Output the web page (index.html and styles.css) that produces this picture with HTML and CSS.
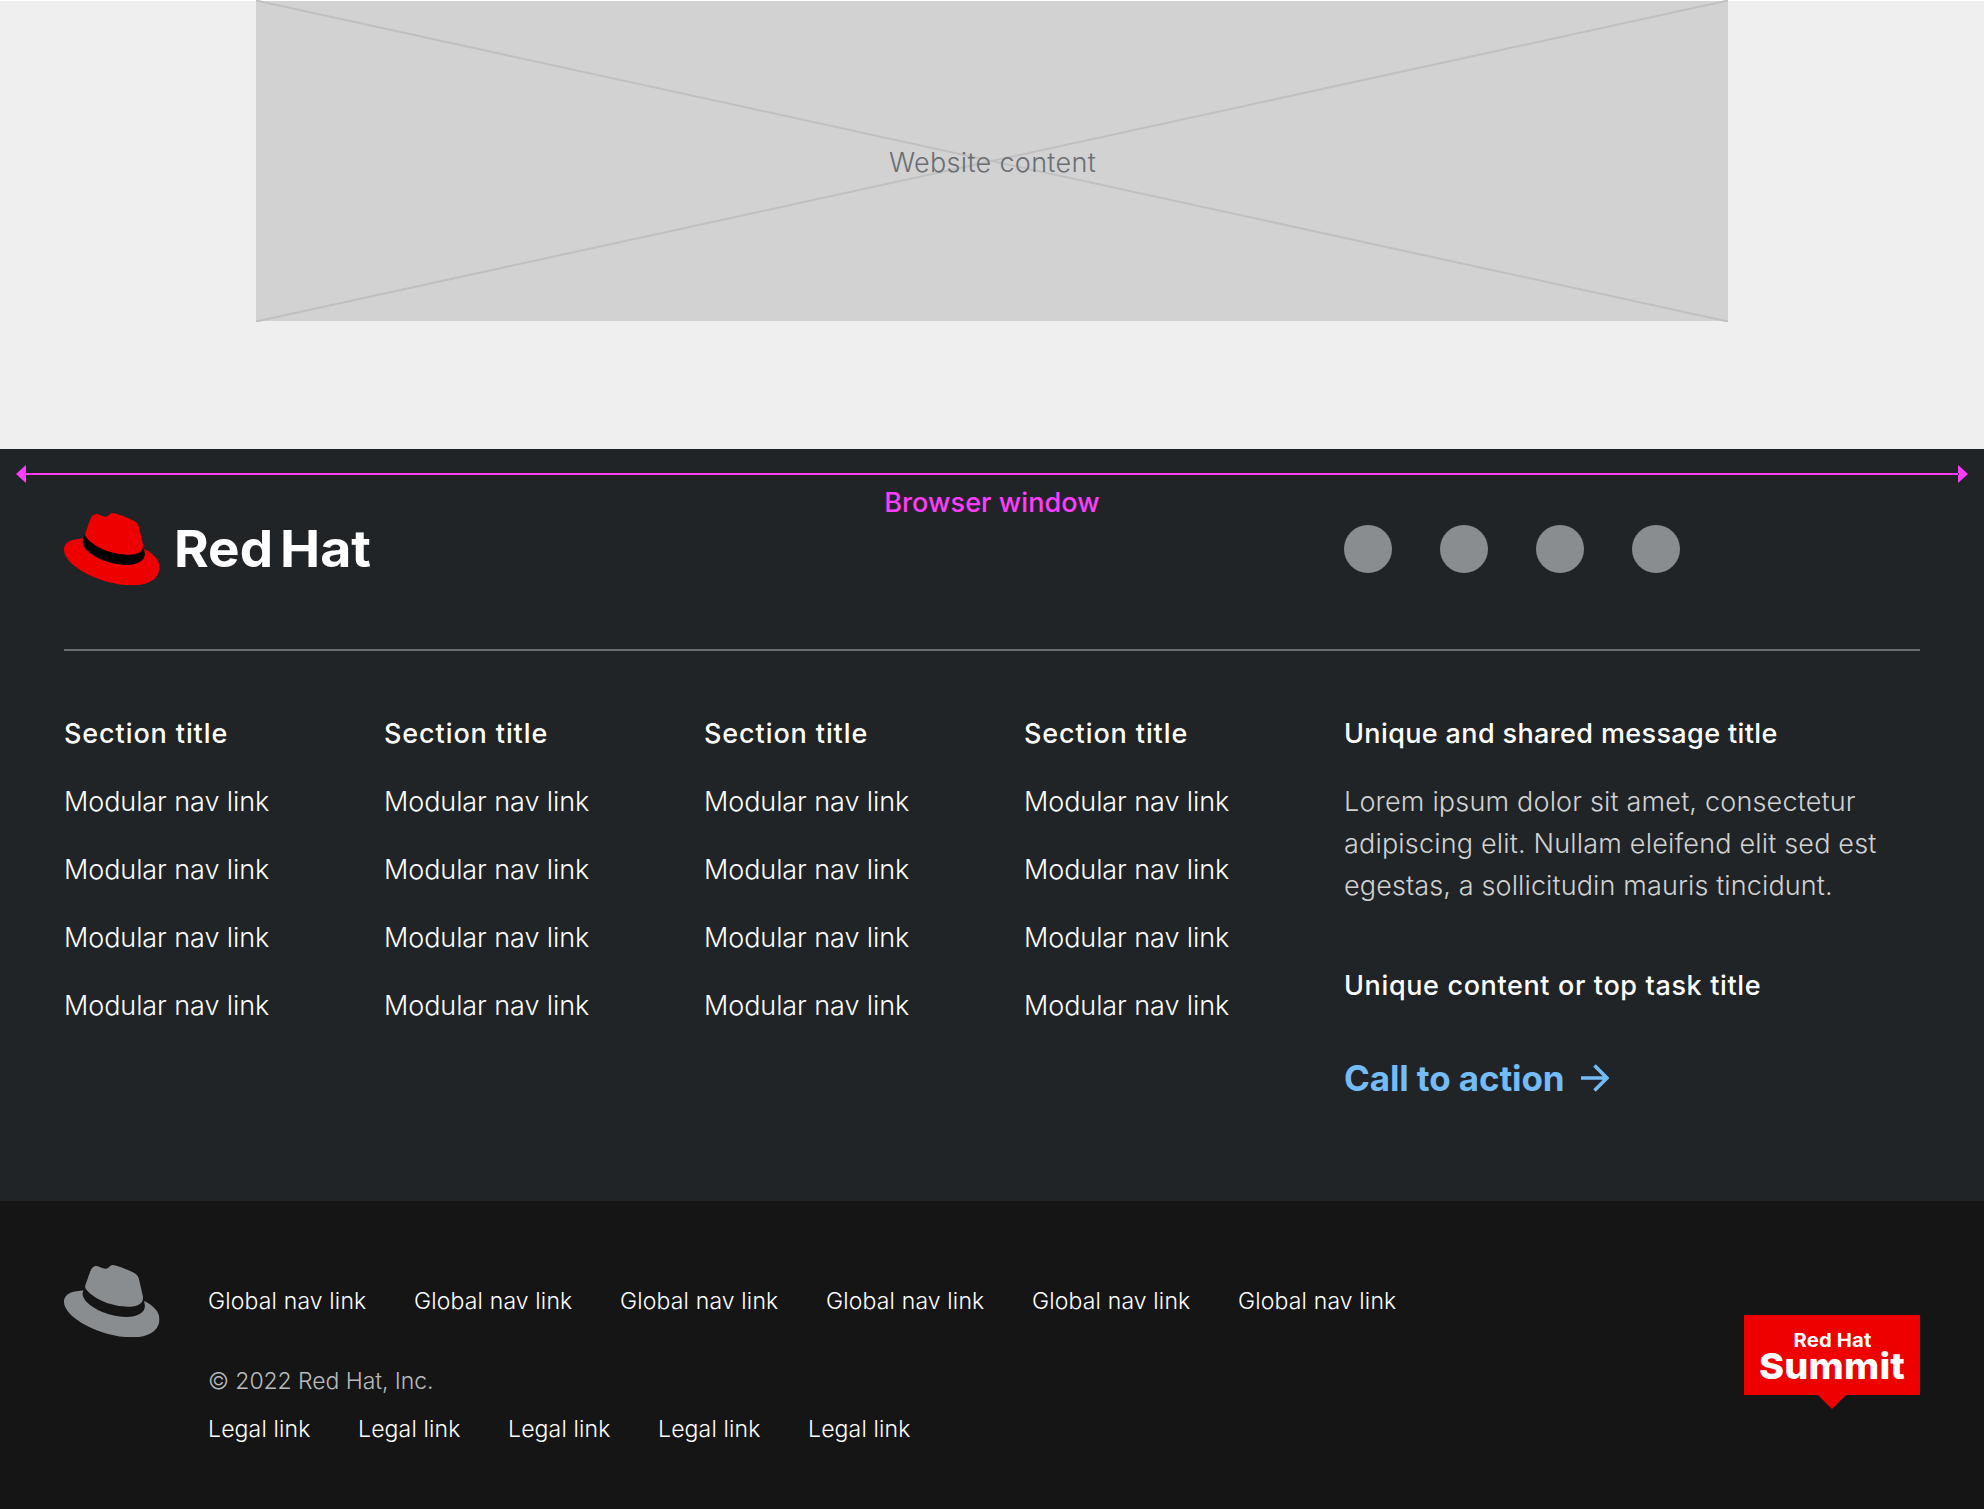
FILE: index.html
```html
<!DOCTYPE html>
<html lang="en">
<head>
<meta charset="utf-8">
<title>Footer</title>
<link rel="stylesheet" href="styles.css">
</head>
<body>
<svg class="defs" aria-hidden="true">
  <symbol id="hat" viewBox="0 2.92 24 18.16">
    <path d="M16.009 13.386c1.577 0 3.86-.326 3.86-2.202a1.765 1.765 0 0 0-.04-.431l-.94-4.08c-.216-.898-.406-1.305-1.982-2.093-1.223-.625-3.888-1.658-4.676-1.658-.733 0-.947.946-1.822.946-.842 0-1.467-.706-2.255-.706-.757 0-1.25.515-1.63 1.576 0 0-1.06 2.99-1.197 3.424a.81.81 0 0 0-.028.245c0 1.162 4.577 4.974 10.71 4.974m4.101-1.435c.218 1.032.218 1.14.218 1.277 0 1.765-1.984 2.745-4.593 2.745-5.895.004-11.06-3.451-11.06-5.734a2.326 2.326 0 0 1 .19-.925C2.746 9.415 0 9.794 0 12.217c0 3.969 9.405 8.861 16.851 8.861 5.71 0 7.149-2.582 7.149-4.62 0-1.605-1.387-3.425-3.887-4.512"/>
  </symbol>
</svg>

<main class="page">
  <div class="placeholder">
    <svg class="cross" viewBox="0 0 1472 321" preserveAspectRatio="none"><path d="M0 .5 1472 320.5M0 320.5 1472 .5"/></svg>
    <span class="placeholder-label">Website content</span>
  </div>
</main>

<footer>
  <div class="primary">
    <div class="measure">
      <svg class="measure-line" viewBox="0 0 1952 18"><path d="M0 9 10 0V18ZM1952 9 1942 0V18ZM9 8H1943V10H9Z"/></svg>
      <span class="measure-label">Browser window</span>
    </div>
    <div class="top">
      <svg class="logo" viewBox="0 0 310 72">
        <path d="M20.11 11.951c.218 1.032.218 1.14.218 1.277 0 1.765-1.984 2.745-4.593 2.745-5.895.004-11.06-3.451-11.06-5.734a2.326 2.326 0 0 1 .19-.925l.463-1.146 8 0 6 3z" transform="translate(0 -11.6) scale(3.98)"/>
        <use class="logo-hat" href="#hat" width="95.5" height="72.3"/>
        <text x="110" y="54.3" textLength="99" lengthAdjust="spacingAndGlyphs">Red</text>
        <text x="216" y="54.3" textLength="91" lengthAdjust="spacingAndGlyphs">Hat</text>
      </svg>
      <div class="social"><i></i><i></i><i></i><i></i></div>
    </div>
    <div class="columns">
      <nav class="links"><h2>Section title</h2><a>Modular nav link</a><a>Modular nav link</a><a>Modular nav link</a><a>Modular nav link</a></nav>
      <nav class="links"><h2>Section title</h2><a>Modular nav link</a><a>Modular nav link</a><a>Modular nav link</a><a>Modular nav link</a></nav>
      <nav class="links"><h2>Section title</h2><a>Modular nav link</a><a>Modular nav link</a><a>Modular nav link</a><a>Modular nav link</a></nav>
      <nav class="links"><h2>Section title</h2><a>Modular nav link</a><a>Modular nav link</a><a>Modular nav link</a><a>Modular nav link</a></nav>
      <section class="message">
        <h2 class="shared">Unique and shared message title</h2>
        <p>Lorem ipsum dolor sit amet, consectetur<br>adipiscing elit. Nullam eleifend elit sed est<br><span class="tight">egestas, a sollicitudin mauris tincidunt.</span></p>
        <h2 class="task">Unique content or top task title</h2>
        <a class="cta">Call to action <svg viewBox="0 0 28 28"><path d="M0 14H26M13.5 1.5 26 14 13.5 26.5"/></svg></a>
      </section>
    </div>
  </div>

  <div class="global">
    <svg class="mark"><use href="#hat" width="95.5" height="72.3"/></svg>
    <div class="global-text">
      <nav class="global-nav"><a>Global nav link</a><a>Global nav link</a><a>Global nav link</a><a>Global nav link</a><a>Global nav link</a><a>Global nav link</a></nav>
      <p class="copyright">© 2022 Red Hat, Inc.</p>
      <nav class="legal"><a>Legal link</a><a>Legal link</a><a>Legal link</a><a>Legal link</a><a>Legal link</a></nav>
    </div>
    <svg class="summit" viewBox="0 0 176 94">
      <path d="M0 0H176V80H102L88 94 74 80H0Z"/>
      <text class="small" x="49.5" y="32" textLength="78" lengthAdjust="spacingAndGlyphs">Red Hat</text>
      <text class="big" x="15" y="64" textLength="146" lengthAdjust="spacingAndGlyphs">Summit</text>
    </svg>
  </div>
</footer>
</body>
</html>
```
FILE: styles.css
```css
* { box-sizing: border-box; }
body { margin: 0; font: 300 27px/42px Inter, sans-serif; color: #fff; background: #151515; }
h2, p { margin: 0; }
svg { display: block; flex: none; }
.defs { position: absolute; width: 0; height: 0; }

.page { height: 449px; border-top: 1px solid #fff; background: #efefef; }
.placeholder { position: relative; width: 1472px; height: 320px; margin: 0 auto; background: #d2d2d2; display: flex; align-items: center; justify-content: center; color: #6a6e73; }
.placeholder-label { position: relative; letter-spacing: .32px; padding: 3px 0 0 1px; }
.cross { position: absolute; left: 0; top: -1px; width: 1472px; height: 322px; fill: none; stroke: #c0c0c0; stroke-width: 2; }

.primary { position: relative; height: 752px; padding: 64px 64px 0; background: #212427; }
.measure { position: absolute; left: 16px; right: 16px; top: 16px; display: flex; flex-direction: column; align-items: center; color: #ff3dff; }
.measure-line { width: 1952px; height: 18px; fill: #ff3dff; }
.measure-label { font-weight: 500; letter-spacing: .08px; line-height: 42px; margin-top: -1px; }

.top { display: flex; height: 138px; border-bottom: 2px solid #6a6e73; }
.logo { width: 310px; height: 72px; overflow: visible; }
.logo-hat { fill: #e00; }
.logo text { fill: #fff; font: 700 51px Inter, sans-serif; }
.social { display: flex; gap: 48px; margin: 12px 0 0 970px; }
.social i { width: 48px; height: 48px; border-radius: 50%; background: #8a8d90; }

.columns { display: grid; grid-template-columns: repeat(4, 320px) 1fr; padding-top: 62px; }
h2 { font-size: 27px; font-weight: 500; line-height: 42px; letter-spacing: .9px; }
.links { display: flex; flex-direction: column; gap: 26px; letter-spacing: -.08px; }
.message p { margin: 26px 0 58px; color: #d2d2d2; letter-spacing: .18px; white-space: nowrap; }
.message .tight { letter-spacing: .12px; }
.shared { letter-spacing: .37px; }
.task { letter-spacing: .63px; }
.cta { display: flex; align-items: center; gap: 16px; margin-top: 44px; font-size: 35px; font-weight: 700; line-height: 54px; letter-spacing: -.12px; color: #73bcf7; }
.cta svg { width: 28px; height: 28px; fill: none; stroke: #73bcf7; stroke-width: 3.6; }

.global { display: flex; height: 308px; padding: 64px 64px 0; font-size: 23px; line-height: 36px; letter-spacing: .15px; background: #151515; }
.mark { width: 96px; height: 73px; fill: #8a8d90; }
.global-text { flex: 1; padding: 18px 0 0 48px; }
.global-nav, .legal { display: grid; grid-auto-flow: column; justify-content: start; white-space: nowrap; }
.global-nav { grid-auto-columns: 206px; }
.legal { grid-auto-columns: 150px; margin-top: 12px; }
.copyright { margin-top: 44px; color: #b8bbbe; letter-spacing: -.07px; }
.summit { width: 176px; height: 94px; margin-top: 50px; fill: #e00; }
.summit text { fill: #fff; font-family: Inter, sans-serif; font-weight: 800; }
.summit .small { font-size: 19px; font-weight: 700; }
.summit .big { font-size: 36px; }
```
